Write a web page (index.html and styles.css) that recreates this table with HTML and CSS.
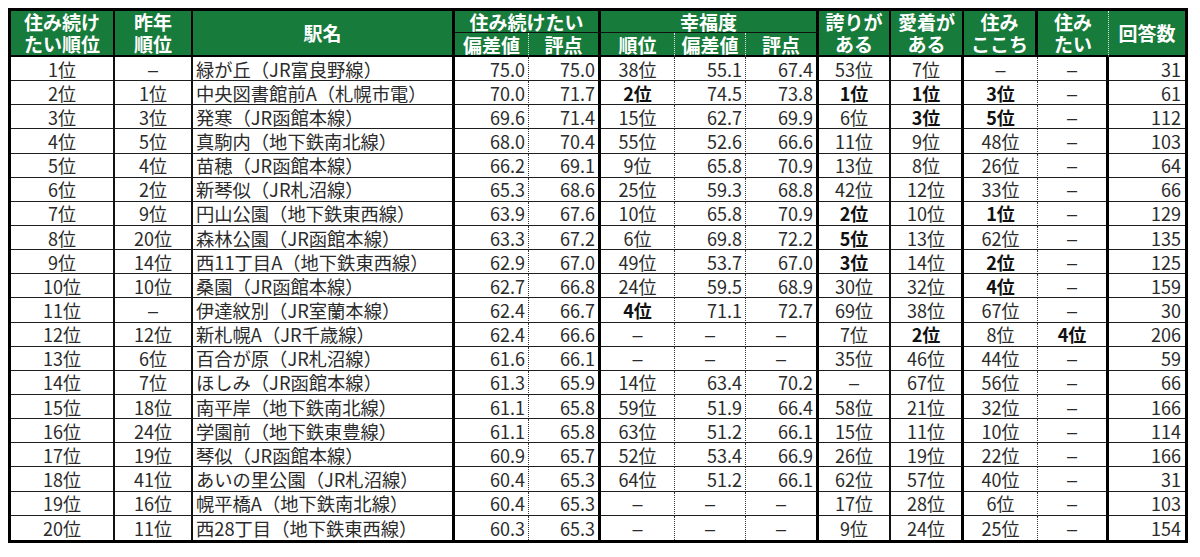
FILE: index.html
```html
<!DOCTYPE html>
<html lang="ja">
<head>
<meta charset="utf-8">
<title>住み続けたい駅ランキング</title>
<link rel="stylesheet" href="styles.css">
</head>
<body>
<table class="rank">
<colgroup>
<col class="w1"><col class="w2"><col class="w3"><col class="w4"><col class="w5"><col class="w6"><col class="w7"><col class="w8"><col class="w9"><col class="w10"><col class="w11"><col class="w12"><col class="w13">
</colgroup>
<thead>
<tr class="h1">
<th rowspan="2" class="bm two">住み続け<br>たい順位</th>
<th rowspan="2" class="bm two">昨年<br>順位</th>
<th rowspan="2" class="bt">駅名</th>
<th colspan="2" class="bt grp">住み続けたい</th>
<th colspan="3" class="bt grp">幸福度</th>
<th rowspan="2" class="bm two">誇りが<br>ある</th>
<th rowspan="2" class="bm two">愛着が<br>ある</th>
<th rowspan="2" class="bt two">住み<br>ここち</th>
<th rowspan="2" class="bd two">住み<br>たい</th>
<th rowspan="2" class="last">回答数</th>
</tr>
<tr class="h2">
<th class="bd">偏差値</th>
<th class="bt">評点</th>
<th class="bd">順位</th>
<th class="bd">偏差値</th>
<th class="bt">評点</th>
</tr>
</thead>
<tbody>
<tr><td>1位</td><td><span class="dash">–</span></td><td>緑が丘（JR富良野線）</td><td>75.0</td><td>75.0</td><td>38位</td><td>55.1</td><td>67.4</td><td>53位</td><td>7位</td><td><span class="dash">–</span></td><td><span class="dash">–</span></td><td>31</td></tr>
<tr><td>2位</td><td>1位</td><td>中央図書館前A（札幌市電）</td><td>70.0</td><td>71.7</td><td class="b">2位</td><td>74.5</td><td>73.8</td><td class="b">1位</td><td class="b">1位</td><td class="b">3位</td><td><span class="dash">–</span></td><td>61</td></tr>
<tr><td>3位</td><td>3位</td><td>発寒（JR函館本線）</td><td>69.6</td><td>71.4</td><td>15位</td><td>62.7</td><td>69.9</td><td>6位</td><td class="b">3位</td><td class="b">5位</td><td><span class="dash">–</span></td><td>112</td></tr>
<tr><td>4位</td><td>5位</td><td>真駒内（地下鉄南北線）</td><td>68.0</td><td>70.4</td><td>55位</td><td>52.6</td><td>66.6</td><td>11位</td><td>9位</td><td>48位</td><td><span class="dash">–</span></td><td>103</td></tr>
<tr><td>5位</td><td>4位</td><td>苗穂（JR函館本線）</td><td>66.2</td><td>69.1</td><td>9位</td><td>65.8</td><td>70.9</td><td>13位</td><td>8位</td><td>26位</td><td><span class="dash">–</span></td><td>64</td></tr>
<tr><td>6位</td><td>2位</td><td>新琴似（JR札沼線）</td><td>65.3</td><td>68.6</td><td>25位</td><td>59.3</td><td>68.8</td><td>42位</td><td>12位</td><td>33位</td><td><span class="dash">–</span></td><td>66</td></tr>
<tr><td>7位</td><td>9位</td><td>円山公園（地下鉄東西線）</td><td>63.9</td><td>67.6</td><td>10位</td><td>65.8</td><td>70.9</td><td class="b">2位</td><td>10位</td><td class="b">1位</td><td><span class="dash">–</span></td><td>129</td></tr>
<tr><td>8位</td><td>20位</td><td>森林公園（JR函館本線）</td><td>63.3</td><td>67.2</td><td>6位</td><td>69.8</td><td>72.2</td><td class="b">5位</td><td>13位</td><td>62位</td><td><span class="dash">–</span></td><td>135</td></tr>
<tr><td>9位</td><td>14位</td><td>西11丁目A（地下鉄東西線）</td><td>62.9</td><td>67.0</td><td>49位</td><td>53.7</td><td>67.0</td><td class="b">3位</td><td>14位</td><td class="b">2位</td><td><span class="dash">–</span></td><td>125</td></tr>
<tr><td>10位</td><td>10位</td><td>桑園（JR函館本線）</td><td>62.7</td><td>66.8</td><td>24位</td><td>59.5</td><td>68.9</td><td>30位</td><td>32位</td><td class="b">4位</td><td><span class="dash">–</span></td><td>159</td></tr>
<tr><td>11位</td><td><span class="dash">–</span></td><td>伊達紋別（JR室蘭本線）</td><td>62.4</td><td>66.7</td><td class="b">4位</td><td>71.1</td><td>72.7</td><td>69位</td><td>38位</td><td>67位</td><td><span class="dash">–</span></td><td>30</td></tr>
<tr><td>12位</td><td>12位</td><td>新札幌A（JR千歳線）</td><td>62.4</td><td>66.6</td><td><span class="dash">–</span></td><td class="c"><span class="dash">–</span></td><td class="c"><span class="dash">–</span></td><td>7位</td><td class="b">2位</td><td>8位</td><td class="b">4位</td><td>206</td></tr>
<tr><td>13位</td><td>6位</td><td>百合が原（JR札沼線）</td><td>61.6</td><td>66.1</td><td><span class="dash">–</span></td><td class="c"><span class="dash">–</span></td><td class="c"><span class="dash">–</span></td><td>35位</td><td>46位</td><td>44位</td><td><span class="dash">–</span></td><td>59</td></tr>
<tr><td>14位</td><td>7位</td><td>ほしみ（JR函館本線）</td><td>61.3</td><td>65.9</td><td>14位</td><td>63.4</td><td>70.2</td><td><span class="dash">–</span></td><td>67位</td><td>56位</td><td><span class="dash">–</span></td><td>66</td></tr>
<tr><td>15位</td><td>18位</td><td>南平岸（地下鉄南北線）</td><td>61.1</td><td>65.8</td><td>59位</td><td>51.9</td><td>66.4</td><td>58位</td><td>21位</td><td>32位</td><td><span class="dash">–</span></td><td>166</td></tr>
<tr><td>16位</td><td>24位</td><td>学園前（地下鉄東豊線）</td><td>61.1</td><td>65.8</td><td>63位</td><td>51.2</td><td>66.1</td><td>15位</td><td>11位</td><td>10位</td><td><span class="dash">–</span></td><td>114</td></tr>
<tr><td>17位</td><td>19位</td><td>琴似（JR函館本線）</td><td>60.9</td><td>65.7</td><td>52位</td><td>53.4</td><td>66.9</td><td>26位</td><td>19位</td><td>22位</td><td><span class="dash">–</span></td><td>166</td></tr>
<tr><td>18位</td><td>41位</td><td>あいの里公園（JR札沼線）</td><td>60.4</td><td>65.3</td><td>64位</td><td>51.2</td><td>66.1</td><td>62位</td><td>57位</td><td>40位</td><td><span class="dash">–</span></td><td>31</td></tr>
<tr><td>19位</td><td>16位</td><td>幌平橋A（地下鉄南北線）</td><td>60.4</td><td>65.3</td><td><span class="dash">–</span></td><td class="c"><span class="dash">–</span></td><td class="c"><span class="dash">–</span></td><td>17位</td><td>28位</td><td>6位</td><td><span class="dash">–</span></td><td>103</td></tr>
<tr><td>20位</td><td>11位</td><td>西28丁目（地下鉄東西線）</td><td>60.3</td><td>65.3</td><td><span class="dash">–</span></td><td class="c"><span class="dash">–</span></td><td class="c"><span class="dash">–</span></td><td>9位</td><td>24位</td><td>25位</td><td><span class="dash">–</span></td><td>154</td></tr>
</tbody>
</table>
</body>
</html>
```
FILE: styles.css
```css
* { box-sizing: border-box; }
html, body { background: #ffffff; }
body {
  margin: 8px;
  font-family: "Noto Sans CJK JP", "Noto Sans", sans-serif;
}
.rank {
  table-layout: fixed;
  border-collapse: separate;
  border-spacing: 0;
  width: 1180px;
  border: 3px solid #000;
}
.w1 { width: 104px; }
.w2 { width: 78px; }
.w3 { width: 262px; }
.w4 { width: 74px; }
.w5 { width: 72px; }
.w6 { width: 74px; }
.w7 { width: 71px; }
.w8 { width: 73px; }
.w9 { width: 72px; }
.w10 { width: 73px; }
.w11 { width: 74px; }
.w12 { width: 71px; }
.w13 { width: 76px; }

thead th {
  background: #177b3b;
  color: #ffffff;
  font-weight: 700;
  font-size: 19px;
  line-height: 21px;
  padding: 0;
  text-align: center;
  vertical-align: middle;
  white-space: nowrap;
  overflow: visible;
  border-bottom: 2px solid #000;
}
.h1 { height: 22px; }
.h2 { height: 23px; }
.h1 th { line-height: 20px; }
.h1 th.two { line-height: 22px; }
.h2 th { line-height: 20px; padding-top: 1px; }
thead th.grp { border-bottom: 1px solid #111; }
thead th.bm { border-right: 2px solid #000; }
thead th.bt { border-right: 3px solid #000; }
thead th.bd { border-right: 1px dotted #d6e8d9; }

tbody tr { height: 24.15px; }
tbody td {
  font-size: 18px;
  line-height: 20px;
  color: #2b2b2b;
  padding: 0 3px;
  text-align: center;
  vertical-align: middle;
  white-space: nowrap;
  overflow: hidden;
  border-bottom: 1px solid #1e1e1e;
}
tbody tr:last-child td { border-bottom: none; }

tbody td:nth-child(1),
tbody td:nth-child(2) { border-right: 2px solid #111; }
tbody td:nth-child(3) { text-align: left; padding-left: 3px; border-right: 3px solid #000; font-size: 18.3px; }
tbody td:nth-child(4) { text-align: right; border-right: 1px dotted #333; }
tbody td:nth-child(5) { text-align: right; border-right: 3px solid #000; }
tbody td:nth-child(6) { border-right: 1px dotted #333; }
tbody td:nth-child(7) { text-align: right; border-right: 1px dotted #333; }
tbody td:nth-child(8) { text-align: right; border-right: 3px solid #000; }
tbody td:nth-child(9) { border-right: 2px solid #111; }
tbody td:nth-child(10) { border-right: 3px solid #000; }
tbody td:nth-child(11) { border-right: 1px dotted #333; }
tbody td:nth-child(12) { border-right: 3px solid #000; }
tbody td:nth-child(13) { text-align: right; padding-right: 4px; }
tbody td.c { text-align: center; }
tbody td.b { font-weight: 700; color: #111; }
.dash { font-family: "Liberation Sans", sans-serif; }
```
